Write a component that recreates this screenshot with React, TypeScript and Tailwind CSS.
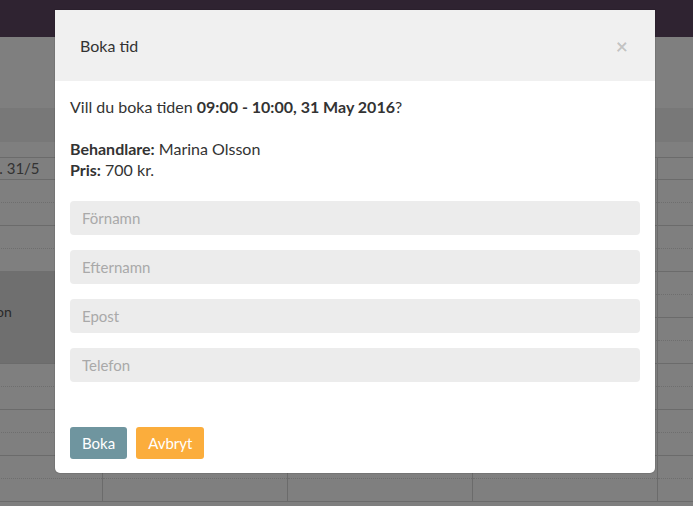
const days = ['Tis. 31/5', 'Ons. 1/6', 'Tor. 2/6', 'Fre. 3/6', 'Lör. 4/6']
const rows = Array.from({ length: 15 }, (_, i) => i)
const fields = ['Förnamn', 'Efternamn', 'Epost', 'Telefon']

function Calendar() {
  return (
    <div className="h-[506px] overflow-hidden bg-white font-['Lato',sans-serif] text-[14px] text-[#555]">
      <div className="h-[37px] bg-[#5e4662]" />
      <div className="h-[71px]" />
      <div className="h-[34px] bg-[#f1f1f1]" />
      <div className="h-[15px]" />
      <div className="-ml-[82px] flex border-t border-[#d6d6d6]">
        {days.map((d, c) => (
          <div key={d} className="w-[185px] shrink-0 border-r border-[#d6d6d6]">
            <div className="flex h-[22px] items-center justify-center border-b border-[#d6d6d6] text-[15px] text-[#666]">
              {c < 4 ? d : ''}
            </div>
            <div className="relative">
              {rows.slice(1).map(r => (
                <div
                  key={r}
                  className={
                    r % 2 === 1
                      ? 'h-[23px] border-b border-dotted border-[#dcdcdc]'
                      : 'h-[23px] border-b border-[#d6d6d6]'
                  }
                />
              ))}
              {c === 0 && (
                <div className="absolute left-0 right-0 top-[91px] h-[92px] bg-[#dedede] pl-[5px] pt-[31px] text-[14px] leading-[20px] text-[#555]">
                  Marina Olsson
                </div>
              )}
            </div>
          </div>
        ))}
      </div>
    </div>
  )
}

function BookingModal() {
  return (
    <div className="w-[600px] rounded-b-[5px] bg-white font-['Lato',sans-serif] text-[16px] text-[#333] shadow-[0_0_0_1px_rgba(0,0,0,0.08)]">
      <div className="flex h-[71px] items-center justify-between bg-[#f0f0f0] pl-[25px] pr-[27px]">
        <span>Boka tid</span>
        <button className="text-[21px] font-bold leading-none text-black/20">×</button>
      </div>
      <div className="px-[15px] pb-[14px] pt-[15px]">
        <div className="leading-[21px]">
          <p>
            Vill du boka tiden <b>09:00 - 10:00, 31 May 2016</b>?
          </p>
          <p className="h-[21px]" />
          <p>
            <b>Behandlare:</b> Marina Olsson
          </p>
          <p>
            <b>Pris:</b> 700 kr.
          </p>
        </div>
        <div className="mt-[21px] flex flex-col gap-[15px]">
          {fields.map(f => (
            <input
              key={f}
              placeholder={f}
              className="h-[34px] w-full rounded-[4px] bg-[#ececec] px-[12px] text-[15px] outline-none placeholder:text-[#a9a9a9]"
            />
          ))}
        </div>
        <div className="mt-[45px] flex gap-[9px] text-[15px]">
          <button className="h-[32px] rounded-[3px] bg-[#6f959f] px-[12px] text-white">Boka</button>
          <button className="h-[32px] rounded-[3px] bg-[#fbad3c] px-[12px] text-white">Avbryt</button>
        </div>
      </div>
    </div>
  )
}

export default function App() {
  return (
    <div className="relative h-[506px] overflow-hidden">
      <Calendar />
      <div className="absolute inset-0 bg-black/50 pl-[55px] pt-[10px]">
        <BookingModal />
      </div>
    </div>
  )
}
